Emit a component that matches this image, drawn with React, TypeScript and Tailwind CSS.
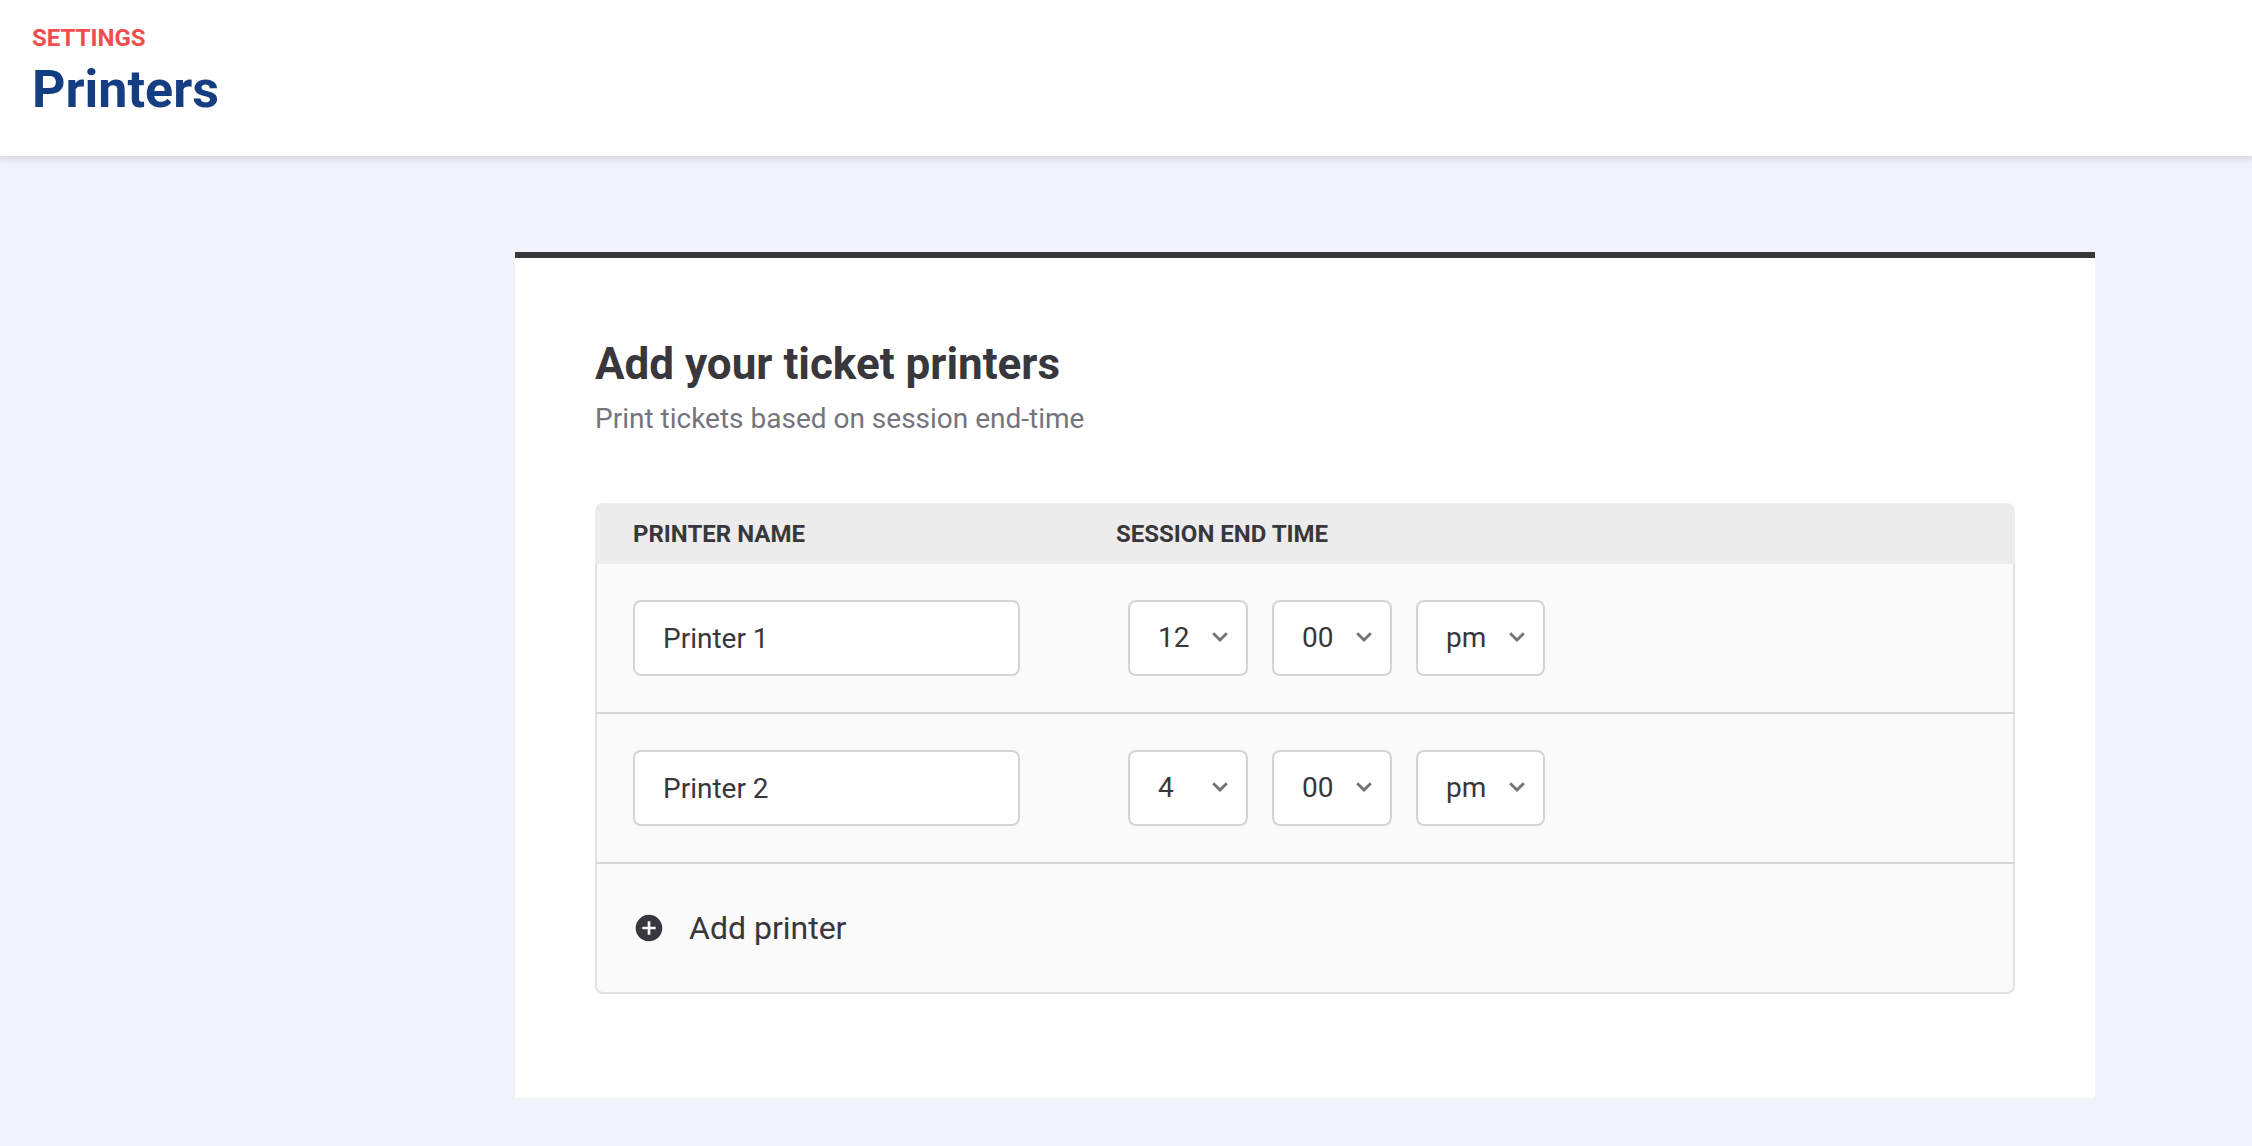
import { useState } from "react";
import { MdAddCircle } from "react-icons/md";

type Printer = { name: string; hour: string; minute: string; period: string };

const HOURS = ["1", "2", "3", "4", "5", "6", "7", "8", "9", "10", "11", "12"];
const MINUTES = ["00", "15", "30", "45"];
const PERIODS = ["am", "pm"];

function Select({
  label,
  value,
  options,
  width,
  onChange,
}: {
  label: string;
  value: string;
  options: string[];
  width: string;
  onChange: (value: string) => void;
}) {
  return (
    <div className={`relative ${width}`}>
      <select
        aria-label={label}
        value={value}
        onChange={(e) => onChange(e.target.value)}
        className="block h-[76px] w-full appearance-none rounded-lg border-2 border-[#d4d4d4] bg-white pl-7 text-[28px] text-[#38373c]"
      >
        {options.map((o) => (
          <option key={o}>{o}</option>
        ))}
      </select>
      <svg
        aria-hidden="true"
        viewBox="0 0 16 10"
        className="pointer-events-none absolute top-8 right-5 h-[10px] w-4"
        fill="none"
        stroke="#75747d"
        strokeWidth="2.9"
      >
        <path d="M1.2 1.2 8 8 14.8 1.2" />
      </svg>
    </div>
  );
}

export default function App() {
  const [printers, setPrinters] = useState<Printer[]>([
    { name: "Printer 1", hour: "12", minute: "00", period: "pm" },
    { name: "Printer 2", hour: "4", minute: "00", period: "pm" },
  ]);

  const update = (index: number, patch: Partial<Printer>) =>
    setPrinters(printers.map((p, i) => (i === index ? { ...p, ...patch } : p)));

  const addPrinter = () =>
    setPrinters([
      ...printers,
      { name: `Printer ${printers.length + 1}`, hour: "12", minute: "00", period: "pm" },
    ]);

  return (
    <div className="flex min-h-screen flex-col bg-[#f2f2fb] font-['Roboto',sans-serif] text-[#38373c]">
      <header className="bg-white px-8 pt-6 pb-9 shadow-[0_1px_6px_2px_rgba(0,0,0,0.12)]">
        <p className="text-2xl leading-7 font-bold text-[#f04e4e] uppercase">Settings</p>
        <h1 className="mt-2 text-[52px] leading-[60px] font-bold text-[#153d82]">Printers</h1>
      </header>

      <main className="mt-24 mr-[157px] mb-12 ml-[515px] border-t-6 border-[#38373c] bg-white px-20 pt-20 pb-[104px]">
        <h2 className="text-[44px] leading-[52px] font-bold">Add your ticket printers</h2>
        <p className="mt-[11px] text-[28px] leading-9 text-[#75747d]">
          Print tickets based on session end-time
        </p>

        <table className="mt-[66px] w-full table-fixed border-separate border-spacing-0 text-left">
          <thead className="text-2xl leading-7 uppercase">
            <tr className="h-[61px]">
              <th scope="col" className="w-[521px] rounded-tl-lg bg-[#ececec] pl-[38px] font-bold">
                Printer name
              </th>
              <th scope="col" className="rounded-tr-lg bg-[#ececec] font-bold">
                Session end time
              </th>
            </tr>
          </thead>
          <tbody>
            {printers.map((p, i) => (
              <tr key={i} className="bg-[#fafafa]">
                <td className="border-b-2 border-l-2 border-b-[#d4d4d4] border-l-[#e2e2e2] py-9 pr-24 pl-9">
                  <input
                    type="text"
                    aria-label="Printer name"
                    value={p.name}
                    onChange={(e) => update(i, { name: e.target.value })}
                    className="block h-[76px] w-full rounded-lg border-2 border-[#d4d4d4] bg-white px-7 text-[28px]"
                  />
                </td>
                <td className="border-r-2 border-b-2 border-r-[#e2e2e2] border-b-[#d4d4d4] py-9 pl-3">
                  <div className="flex gap-6">
                    <Select
                      label="Hour"
                      width="w-[120px]"
                      value={p.hour}
                      options={HOURS}
                      onChange={(hour) => update(i, { hour })}
                    />
                    <Select
                      label="Minute"
                      width="w-[120px]"
                      value={p.minute}
                      options={MINUTES}
                      onChange={(minute) => update(i, { minute })}
                    />
                    <Select
                      label="AM or PM"
                      width="w-[129px]"
                      value={p.period}
                      options={PERIODS}
                      onChange={(period) => update(i, { period })}
                    />
                  </div>
                </td>
              </tr>
            ))}
            <tr>
              <td
                colSpan={2}
                className="rounded-b-lg border-x-2 border-b-2 border-[#e2e2e2] bg-[#fafafa] px-9 py-11"
              >
                <button
                  type="button"
                  onClick={addPrinter}
                  className="flex items-center gap-6 text-[32px] leading-10"
                >
                  <MdAddCircle aria-hidden="true" className="size-8" />
                  Add printer
                </button>
              </td>
            </tr>
          </tbody>
        </table>
      </main>
    </div>
  );
}
